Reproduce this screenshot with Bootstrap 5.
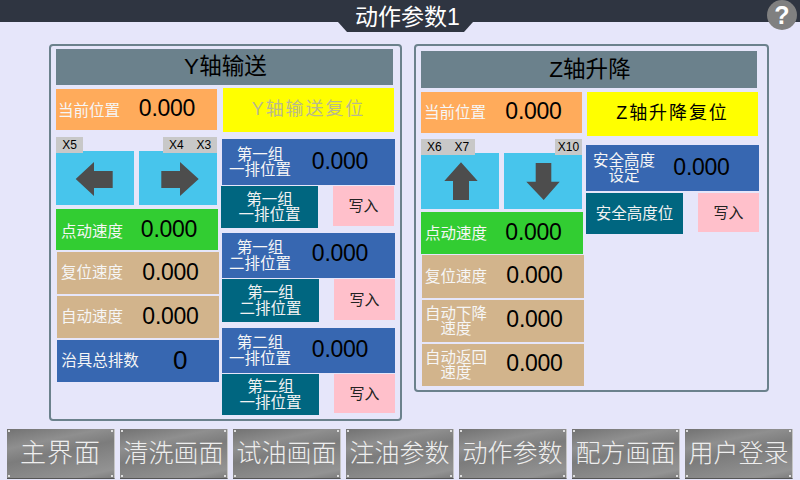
<!DOCTYPE html>
<html lang="zh-CN">
<head>
<meta charset="utf-8">
<title>动作参数1</title>
<link href="https://cdn.jsdelivr.net/npm/bootstrap@5.3.0/dist/css/bootstrap.min.css" rel="stylesheet">
<style>
html,body{height:480px;overflow:hidden}
body{width:800px;background:#e6e6fa;font-family:"Liberation Sans","Noto Sans CJK SC",sans-serif;color:#000;font-size:15.5px;line-height:15.5px}
.top-strip{height:22px;background:#2f3541;flex:none}
.title-tab{width:135px;height:32px;margin-left:11px;padding-left:4px;background:#2f3541;color:#fff;font-size:23px;line-height:34px;clip-path:polygon(0 22px,9px 32px,126px 32px,135px 22px,135px 0,0 0)}
.help-dot{top:0;left:767px;width:30px;height:30px;background:#808080;color:#fff;font-weight:700;font-size:25px;line-height:30px}
.stage{height:407px;flex:none}
.pane{border:2px solid #6b818c;border-radius:4px;margin-top:22px;flex:none}
.pane-y{width:353px;height:377px;margin-left:49px}
.pane-z{width:355px;height:348px;margin-left:12px}
.pane-head{background:#6b818c;font-size:22.5px;letter-spacing:.1px}
.pane-y .pane-head{width:337px;height:36px;margin:3px 0 0 5px;padding-left:2px}
.pane-z .pane-head{width:336px;height:37px;margin:5px 0 0 5px;padding-left:2px}
.lane-a{width:165px;margin-left:5px;flex:none}
.lane-b{flex:none}
.fld{display:grid;align-items:center;text-align:center;color:#f6f6f6}
.fld b{font-weight:400;font-size:23px;letter-spacing:-.25px;line-height:24px;color:#000;margin-bottom:2px}
.fld b.up2{margin-bottom:4px}
.fld b.up3{margin-bottom:6px}
.fld b.big-count{font-size:26px}
.fld span.dn1{padding-top:2px}
.fld span.dn2{padding-top:4px}
.c-orange{background:#ffab5b}.c-green{background:#32cd32}.c-tan{background:#d2b48c}.c-blue{background:#3767b1}
.g-orange{grid-template-columns:66px 90px}
.g-green{grid-template-columns:72px 82px}
.g-tan{grid-template-columns:70px 87px}
.g-count{grid-template-columns:86px 74px}
.g-group{grid-template-columns:76px 84px}
.g-zorange{grid-template-columns:68px 89px}
.g-zgreen{grid-template-columns:70px 85px}
.g-safe{grid-template-columns:76px 79px}
.w161{width:161px}.w162{width:162px}.w173{width:173px}
.ml1{margin-left:1px}.ml2{margin-left:2px}
.h39{height:39px}.h40{height:40px}.h41{height:41px}.h42{height:42px}.h43{height:43px}.h44{height:44px}.h45{height:45px}.h46{height:46px}
.mt1{margin-top:1px}.mt2{margin-top:2px}.mt3{margin-top:3px}.mt4{margin-top:4px}.mt5{margin-top:5px}.mt6{margin-top:6px}.mt7{margin-top:7px}.mt9{margin-top:9px}.mt20{margin-top:20px}.mt21{margin-top:21px}
.jog-pair{gap:5px;width:161px}
.jog{width:78px;background:#47c5ec}
.jog svg{display:block;width:78px;height:100%}
.jog-y{height:54px}.jog-z{height:56px}
.tag-chip{top:-14px;height:16px;background:#c8c8c8;color:#000;font-size:12px;line-height:16px;word-spacing:9.5px}
.chip-l{left:0}.chip-r{right:0}
.w27{width:27px}.w54{width:54px}
.reset-key{width:171px;background:#ff0;font-size:18px;letter-spacing:1.9px}
.reset-off{color:#b9b98f}
.wr-row{align-items:flex-start}
.store-name{width:97px;background:#006680;color:#f2f2f2}
.store-key{width:61px;margin-left:15px;background:#ffc0cb;font-size:15px;color:#222}
.foot-keys{gap:5px;padding-left:7px;height:50px;flex:none}
.foot-key{width:108px;height:50px;color:#eee;font-size:25px;font-weight:300;
 border-bottom:1px solid #555;border-right:1px solid #c4c4c4;
 background:
  radial-gradient(circle at 2px 2px,#ddd 0,#ddd 1px,transparent 1.5px),
  radial-gradient(circle at calc(100% - 2px) 2px,#ddd 0,#ddd 1px,transparent 1.5px),
  radial-gradient(circle at 2px calc(100% - 2px),#ddd 0,#ddd 1px,transparent 1.5px),
  radial-gradient(circle at calc(100% - 2px) calc(100% - 2px),#ddd 0,#ddd 1px,transparent 1.5px),
  linear-gradient(168deg,#727272 0,#8f8f8f 28%,#7c7c7c 48%,#8a8a8a 72%,#939393 88%,#7d7d7d 100%)}
.foot-main{font-size:26px;letter-spacing:1px}
</style>
</head>
<body class="d-flex flex-column m-0">
<header class="top-strip position-relative d-flex justify-content-center">
  <div class="title-tab text-center">动作参数1</div>
  <div class="help-dot position-absolute rounded-circle text-center">?</div>
</header>
<main class="stage d-flex align-items-start">
  <section class="pane pane-y">
    <div class="pane-head d-flex align-items-center justify-content-center">Y轴输送</div>
    <div class="d-flex">
      <div class="lane-a">
        <div class="fld c-orange g-orange w161 h41 mt4"><span class="dn1">当前位置</span><b class="up2">0.000</b></div>
        <div class="jog-pair d-flex mt21">
          <div class="jog jog-y position-relative">
            <span class="tag-chip chip-l w27 position-absolute text-center">X5</span>
            <svg viewBox="0 0 78 54" aria-hidden="true"><path fill="#4d4d4d" d="M19.7 28 38 11V20H56.7V37H38V45Z"/></svg>
          </div>
          <div class="jog jog-y position-relative">
            <span class="tag-chip chip-r w54 position-absolute text-center">X4 X3</span>
            <svg viewBox="0 0 78 54" aria-hidden="true"><path fill="#4d4d4d" d="M59.7 28 41 11V20H22.3V37H41V45Z"/></svg>
          </div>
        </div>
        <div class="fld c-green g-green w162 h41 mt4"><span class="dn2">点动速度</span><b>0.000</b></div>
        <div class="fld c-tan g-tan w162 h42 ml1 mt2"><span>复位速度</span><b>0.000</b></div>
        <div class="fld c-tan g-tan w162 h42 ml1 mt2"><span>自动速度</span><b>0.000</b></div>
        <div class="fld c-blue g-count w162 h42 ml1 mt2"><span>治具总排数</span><b class="big-count">0</b></div>
      </div>
      <div class="lane-b">
        <div class="reset-key reset-off h44 d-flex align-items-center justify-content-center ml2 mt3">Y轴输送复位</div>
        <div class="fld c-blue g-group w173 h46 ml1 mt7"><span>第一组<br>一排位置</span><b>0.000</b></div>
        <div class="d-flex wr-row mt1">
          <div class="store-name h42 d-flex align-items-center justify-content-center text-center">第一组<br>一排位置</div>
          <div class="store-key h40 d-flex align-items-center justify-content-center">写入</div>
        </div>
        <div class="fld c-blue g-group w173 h45 ml1 mt5"><span>第一组<br>二排位置</span><b class="up3">0.000</b></div>
        <div class="d-flex wr-row mt1 ml1">
          <div class="store-name h43 d-flex align-items-center justify-content-center text-center">第一组<br>二排位置</div>
          <div class="store-key h41 d-flex align-items-center justify-content-center">写入</div>
        </div>
        <div class="fld c-blue g-group w173 h45 ml1 mt6"><span>第二组<br>一排位置</span><b class="up2">0.000</b></div>
        <div class="d-flex wr-row mt1 ml1">
          <div class="store-name h41 d-flex align-items-center justify-content-center text-center">第二组<br>一排位置</div>
          <div class="store-key h39 d-flex align-items-center justify-content-center">写入</div>
        </div>
      </div>
    </div>
  </section>
  <section class="pane pane-z">
    <div class="pane-head d-flex align-items-center justify-content-center">Z轴升降</div>
    <div class="d-flex">
      <div class="lane-a">
        <div class="fld c-orange g-zorange w161 h41 mt4"><span>当前位置</span><b class="up2">0.000</b></div>
        <div class="jog-pair d-flex mt20">
          <div class="jog jog-z position-relative">
            <span class="tag-chip chip-l w54 position-absolute text-center">X6 X7</span>
            <svg viewBox="0 0 78 56" aria-hidden="true"><path fill="#4d4d4d" d="M40 9.3 56.7 28H48V47H32V28H23.3Z"/></svg>
          </div>
          <div class="jog jog-z position-relative">
            <span class="tag-chip chip-r w27 position-absolute text-center">X10</span>
            <svg viewBox="0 0 78 56" aria-hidden="true"><path fill="#4d4d4d" d="M39.7 47 55.7 28.7H47.3V10H31.7V28.7H22.3Z"/></svg>
          </div>
        </div>
        <div class="fld c-green g-zgreen w162 h42 mt3"><span class="dn1">点动速度</span><b>0.000</b></div>
        <div class="fld c-tan g-zorange w162 h43 ml1 mt1"><span>复位速度</span><b class="up2">0.000</b></div>
        <div class="fld c-tan g-zorange w162 h42 ml1 mt2"><span>自动下降<br>速度</span><b class="up2">0.000</b></div>
        <div class="fld c-tan g-zorange w162 h42 ml1 mt2"><span>自动返回<br>速度</span><b class="up2">0.000</b></div>
      </div>
      <div class="lane-b">
        <div class="reset-key h44 d-flex align-items-center justify-content-center ml1 mt4">Z轴升降复位</div>
        <div class="fld c-blue g-safe w173 h46 mt9"><span>安全高度<br>设定</span><b>0.000</b></div>
        <div class="d-flex wr-row mt2">
          <div class="store-name h41 d-flex align-items-center justify-content-center">安全高度位</div>
          <div class="store-key h39 d-flex align-items-center justify-content-center">写入</div>
        </div>
      </div>
    </div>
  </section>
</main>
<nav class="foot-keys d-flex">
  <div class="foot-key foot-main d-flex align-items-center justify-content-center">主界面</div>
  <div class="foot-key d-flex align-items-center justify-content-center">清洗画面</div>
  <div class="foot-key d-flex align-items-center justify-content-center">试油画面</div>
  <div class="foot-key d-flex align-items-center justify-content-center">注油参数</div>
  <div class="foot-key d-flex align-items-center justify-content-center">动作参数</div>
  <div class="foot-key d-flex align-items-center justify-content-center">配方画面</div>
  <div class="foot-key d-flex align-items-center justify-content-center">用户登录</div>
</nav>
<script src="https://cdn.jsdelivr.net/npm/bootstrap@5.3.0/dist/js/bootstrap.bundle.min.js"></script>
</body>
</html>
